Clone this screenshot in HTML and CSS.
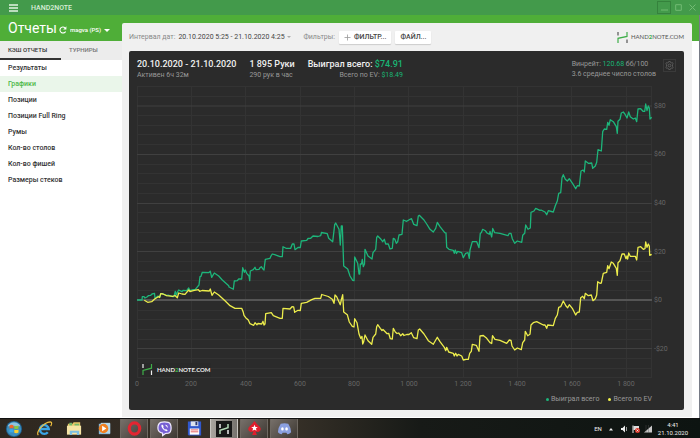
FILE: index.html
```html
<!DOCTYPE html>
<html lang="ru">
<head>
    <meta charset="UTF-8">
    <title>HAND2NOTE</title>
    <link rel="stylesheet" href="styles.css">
</head>
<body>
    <!-- window title bar -->
    <header class="titlebar">
        <button class="menu-button" type="button" aria-label="Меню">
            <svg width="9" height="8" viewBox="0 0 9 8"><path d="M0 1h9M0 4h9M0 7h9" stroke="#e4f3e3" stroke-width="1.4"/></svg>
        </button>
        <span class="app-name">HAND2NOTE</span>
        <div class="window-buttons">
            <button class="focused" type="button" aria-label="Свернуть"><svg width="7" height="7" viewBox="0 0 7 7"><path d="M0 6h7"/></svg></button>
            <button type="button" aria-label="Развернуть"><svg width="7" height="7" viewBox="0 0 7 7"><path d="M.7 .7h5.6v5.6H.7z"/></svg></button>
            <button type="button" aria-label="Закрыть"><svg width="7" height="7" viewBox="0 0 7 7"><path d="M.5 .5l6 6M6.5 .5l-6 6"/></svg></button>
        </div>
    </header>

    <div class="app">
        <aside class="sidebar">
            <div class="sidebar-head">
                <h1>Отчеты</h1>
                <button class="refresh" type="button" aria-label="Обновить">
                    <svg width="8" height="8" viewBox="0 0 8 8"><path d="M6.6 5.4A3 3 0 1 1 6 1.8" fill="none" stroke="#fff" stroke-width="1.1"/><path d="M7.4 .3v3.2H4.2z" fill="#fff"/></svg>
                </button>
                <select class="account" aria-label="Аккаунт"><option>magva (PS)</option></select>
            </div>
            <div class="tabs">
                <button class="active" type="button">КЭШ ОТЧЕТЫ</button>
                <button type="button">ТУРНИРЫ</button>
            </div>
            <nav class="reports">
                <a href="#results">Результаты</a>
                <a class="active" href="#charts">Графики</a>
                <a href="#positions">Позиции</a>
                <a href="#positions-fr">Позиции Full Ring</a>
                <a href="#rooms">Румы</a>
                <a href="#tables">Кол-во столов</a>
                <a href="#chips">Кол-во фишей</a>
                <a href="#stacks">Размеры стеков</a>
            </nav>
        </aside>

        <main class="content">
            <div class="toolbar">
                <label for="dates">Интервал дат:</label>
                <select id="dates" class="dates"><option>20.10.2020 5:25 - 21.10.2020 4:25</option></select>
                <span class="filters-label">Фильтры:</span>
                <button class="tool" type="button"><svg width="7" height="7" viewBox="0 0 7 7"><path d="M3.5 .5v6M.5 3.5h6" stroke="#999" stroke-width=".8"/></svg>ФИЛЬТР...</button>
                <button class="tool" type="button">ФАЙЛ...</button>
                <div class="brand">
                    <svg width="11" height="11" viewBox="0 0 11 11" fill="none" stroke-width="1.2"><path d="M1 0v3.6M10 7.4V11" stroke="#555"/><path d="M1 11V6.3L10 4.4V0" stroke="#3fae49"/></svg>
                    <span>HAND<b>2</b>NOTE.COM</span>
                </div>
            </div>

            <section class="card">
                <div class="stats">
                    <div class="stat">
                        <strong>20.10.2020 - 21.10.2020</strong>
                        <span>Активен 6ч 32м</span>
                    </div>
                    <div class="stat">
                        <strong>1 895 Руки</strong>
                        <span>290 рук в час</span>
                    </div>
                    <div class="stat right">
                        <strong>Выиграл всего: <em>$74.91</em></strong>
                        <span>Всего по EV: <em>$18.49</em></span>
                    </div>
                    <div class="winrate">
                        <span>Винрейт: <em>120.68</em> бб/100</span>
                        <span>3.6 среднее число столов</span>
                    </div>
                    <button class="settings" type="button" aria-label="Настройки">
                        <svg width="9" height="9" viewBox="0 0 9 9" fill="none" stroke="#666" stroke-width=".8"><path d="M3.7 .5h1.6l.3 1 .8.4 1-.3.8 1.3-.7.8v1.6l.7.8-.8 1.3-1-.3-.8.4-.3 1H3.7l-.3-1-.8-.4-1 .3-.8-1.300.7-.8V3.700l-.7-.8.8-1.300 1 .3.8-.4z"/><circle cx="4.5" cy="4.5" r="1.4"/></svg>
                    </button>
                </div>

                <svg class="chart" viewBox="137 84 547 308" role="img" aria-label="График выигрыша">
                    <!-- minor grid -->
                    <path class="minor" d="M137 86.5h515M137 96.5h515M137 115.5h515M137 125.5h515M137 134.5h515M137 144.5h515M137 164.5h515M137 173.5h515M137 183.5h515M137 193.5h515M137 212.5h515M137 222.5h515M137 232.5h515M137 242.5h515M137 261.5h515M137 271.5h515M137 280.5h515M137 290.5h515M137 310.5h515M137 319.5h515M137 329.5h515M137 339.5h515M137 358.5h515M137 368.5h515M137 377.5h515"/>
                    <path class="minor" d="M137.5 86v291M191.5 86v291M245.5 86v291M300.5 86v291M354.5 86v291M408.5 86v291M463.5 86v291M517.5 86v291M571.5 86v291M626.5 86v291M651.5 86v291"/>
                    <!-- $20 steps and the zero line -->
                    <path class="major" d="M137 106h515M137 154.5h515M137 203.5h515M137 251.5h515M137 348.5h515"/>
                    <path class="zero" d="M137 300h515"/>

                    <!-- watermark -->
                    <rect x="139" y="363" width="72" height="14" fill="#292929"/>
                    <g fill="none" stroke-width="1.2">
                        <path d="M143 364v4M151.5 370.5v4.5" stroke="#eee"/>
                        <path d="M143 375v-4.6l8.5-2.2V364" stroke="#3fae49"/>
                    </g>
                    <text class="watermark" x="157" y="372">HAND<tspan fill="#3fae49">2</tspan>NOTE.COM</text>

                    <polyline class="line won" points="137,300 142,300 142.3,296.7 144,296.7 145,298 147.3,296.7 148.3,295.7 150.7,295.3 152,294 154.5,293.3 155,298.3 158,296 160,297 160.7,293.7 163,293.7 166.7,295.7 168,295 172.7,296.7 174,296.7 175.3,291.3 176.3,295 177.5,292 178.7,290 182,291.7 183,290.3 186.7,290.7 188.7,288 190,290.7 193,289.7 195.3,289.3 199,285 200,276.7 201,276.3 202.3,272.3 208.7,272.7 210.3,271.3 211.7,277.3 214.3,273 218.7,276 222.3,280 228.7,285.7 229,287 233.3,289.3 234.3,281 237.3,280.7 238.7,279 241.7,279 242.7,267.7 244.3,272.3 245.3,270 246.7,273.3 249,276 249.7,280.7 250.3,271 253.3,269.7 255,267.3 256,269.7 259,269.3 260,267.7 261.3,266.7 262.7,268.7 264,270 265.3,259.3 270,258.3 271,256 272.3,254 274.7,254.7 280,256.7 282.3,256.7 283,246.7 286,248.3 290.7,248.3 292.3,244 294,244 295,249.7 298.3,247.3 300.3,247.5 301.3,241 306.7,240.3 308,238.5 310.7,238.3 313,236 318,236.5 320.7,235.7 321.5,232.5 327.3,233.7 328.7,238.3 332.7,241.7 334.7,224.7 335.7,223 339,229.3 340.3,245 341.3,226 342.3,226 343.7,266 347.7,269 350,276 352.7,280.3 354,280.7 354.7,257 357.7,263.3 359,274 359.7,274 360.3,264 361.5,264 362.3,259.3 363.3,266.7 364.5,264 365,249.3 368,256 372,259 373,252.7 375.7,249.3 376.7,237.3 377.7,236 381,239.3 382.7,241.7 384.3,239.3 385.7,244 388.3,244 390,249 392.3,248.3 393.3,238.3 394.7,239 396.3,243.3 397.7,241.7 399,235 402,234.3 403.3,220 406.7,221.3 410,219.3 411.5,218.7 413.7,224.3 417,225.7 418.3,216 419.3,215.3 424,220 427,224.5 430,229.3 433.3,232 435.7,228.3 437.3,222.3 440,226.7 444.7,232.7 446,233 446.7,247.3 449,249.3 453.3,250.3 454.3,253.3 455.3,250 456.5,253.5 457.7,251.3 461.7,252.7 463.3,257.7 465.7,253.3 468,252.7 469.3,258.3 470,250 472.3,241.7 476.7,241.7 479,247.7 480.3,233.3 481.3,232.7 482.7,229.3 485.3,230.7 487,233 489.3,234.3 490,231.5 491.7,237 492.7,228.5 494.7,232.7 500,233.3 508,235.7 509.3,233.3 511,233.3 512.3,238.7 514.7,243.3 517.3,241 521.7,242.3 522.7,235.3 524.7,233.3 525.7,225 528,229.3 530.3,228 531,212.3 534,211 535.7,208.3 540,210.3 541,210 545,212 546.7,214.7 548.3,210.7 553.3,212 555.3,205.7 557.3,201 558.7,193.3 560.7,192.7 562,177.7 563.3,174.7 565.3,179.3 567.3,181 569.3,178.7 573.3,184.7 575.7,188.7 577.3,185.7 579.3,186 581,171 583,170 584.3,172 585.3,161 588.3,163.3 591.7,163 592.7,168.3 595.3,166 596.7,162.3 598,149.7 601.3,151 602.7,131.7 604.3,129 606.7,129.3 607.7,122.3 609,125.3 610.3,119.7 613.3,121.7 616.3,126.7 617.3,133.3 618,121.3 620,119.3 621.3,113 623.3,112 625.3,114.7 627,118 628.7,112 630.3,116.7 633.3,119 635.3,118 636.7,121.7 638,109 640.7,108.7 643,111.3 644.7,111.3 645.7,104 647,110.7 648.3,106 649.3,108 650,119 651.7,117.3"/>

                    <polyline class="line ev" points="144.3,300.3 147.7,302.3 151.7,301.7 154.7,299 158.3,296.7 159.5,297.5 160.7,293.7 163,294 166.7,295.7 172.7,296.3 175,295.5 177.3,297.7 178.7,293 182,294 185,294.3 188.7,290 190,291.5 193.3,290.7 198.3,289.7 199.7,291.3 202,290.5 209.3,291 210.3,289 212,295.3 214.3,292 218.7,295 225,300.7 230,305.7 235,308.3 241.7,308.3 243.3,312.3 244,315.3 245.7,317.7 248.3,320 250,323.7 253.7,325.3 255,322.7 257,324.7 258,323.5 261.7,324 263,321.3 264,325 265,324 265.7,313.7 271.3,312.7 273.3,315.7 280,318.3 282.3,318.3 283,308.3 290,309 292,306.7 293.7,307 294.7,312.3 298,310.3 300.3,310.5 301.3,303.3 306.7,302.3 311.7,299.7 315,298.3 320.7,298.3 321.7,294.5 328.3,296.5 332.3,299.3 334,303.3 335,295 336.7,296.7 340.3,304.7 341.3,300 342.7,294.7 343.7,312 347.3,314.7 349.3,322 352.3,326.3 354,327 354.7,318.7 357,322.7 359,334 360.7,338.3 362,336.5 362.7,344 363.7,341.7 365,335 368,340.7 371.7,344.3 373,337.3 375.7,334 376.7,326.7 377.7,324.7 380.3,328.3 382,330.5 383,329.5 385.7,332.3 387,333.7 388.7,333.3 390.3,338.7 392.3,339 393.3,328.3 395.3,332 397,333.5 398.7,333 400.7,335.7 402.7,333.7 404,335.5 406.7,334.5 409,334.5 411.3,332.7 413.7,337.7 417,338.7 418.3,330 419.7,329 424,334 428.3,340.7 433.3,344.3 437.3,337.3 440,341.7 444.3,347.3 445.7,350.7 446.7,347.3 448.7,352 453.3,353.3 454.3,356 455.7,353.3 457,356 458.3,354.3 461.7,356 463.3,360 466,359.3 468.3,359.3 469.7,353.3 471.3,351.3 472.3,344.3 476.3,345.3 479,351.3 480,336 483.3,335.5 486.7,338.3 490,342.7 491.7,343.5 492.5,335.7 495,339.3 500,340.3 506.7,343.3 509.3,340 511,340.3 512,346 514.7,350 517.3,348 521.3,349.7 522.7,342.7 524.7,340 525.3,331.3 527.7,335.7 530,334.3 531,325 533.3,322.7 536.7,321.7 543.3,325 545,325 546.7,328.3 547.7,325 553.3,325.7 555.3,318.3 557.3,315 558.7,307.3 560.7,306.7 563.3,301 566,306 567.7,307.7 569.3,304.7 572.3,308.3 575.7,315 577.3,312.3 579.3,312 580.7,297.7 582.7,296.3 584.3,298.7 585.3,293.3 588.3,295.7 591.3,295 593,300.7 595.3,298.7 596.7,295 597.7,281.7 600,283.3 601.3,283 603.3,273.3 606.7,272.3 607.7,265.7 609,268.7 611.3,262 613.3,263.3 616.3,268.3 617.3,275.3 618,262.7 620,260.7 622,254 624.3,254 626,258.7 627,256 627.7,259 628.7,253 630.3,256.3 635.3,256.3 636.7,260 638,247.3 640.7,246.7 643.3,249.3 645,248.7 645.7,242 647,247.3 648.3,244 649.3,246 649.7,255.3 651.7,254.3"/>

                    <g class="axis">
                        <text x="654" y="108">$80</text>
                        <text x="654" y="156">$60</text>
                        <text x="654" y="205">$40</text>
                        <text x="654" y="254">$20</text>
                        <text x="654" y="302">$0</text>
                        <text x="654" y="351">-$20</text>
                    </g>
                    <g class="axis middle">
                        <text x="137" y="386">0</text>
                        <text x="191" y="386">200</text>
                        <text x="246" y="386">400</text>
                        <text x="300" y="386">600</text>
                        <text x="354" y="386">800</text>
                        <text x="409" y="386">1 000</text>
                        <text x="463" y="386">1 200</text>
                        <text x="517" y="386">1 400</text>
                        <text x="572" y="386">1 600</text>
                        <text x="626" y="386">1 800</text>
                    </g>
                </svg>

                <div class="legend">
                    <span class="won">Выиграл всего</span>
                    <span class="ev">Всего по EV</span>
                </div>
            </section>
        </main>
    </div>

    <!-- desktop taskbar -->
    <footer class="taskbar">
        <button type="button" aria-label="Пуск">
            <svg width="18" height="18" viewBox="0 0 20 20"><circle cx="10" cy="10" r="9" fill="#1f5f8c"/><circle cx="10" cy="10" r="8" fill="#3d8fbd"/><path d="M3 7a7.5 6.5 0 0 1 14 0z" fill="#8fc4de"/><path d="M5 6q2.3-1.3 4.5 0v3.5q-2.2-1-4.5 0z" fill="#f0662c"/><path d="M10.3 6.3q2.2 1 4.7-.3v3.5q-2.5 1-4.7 .2z" fill="#8cc63e"/><path d="M5 10.5q2.3-1 4.5 0V14q-2.2-1-4.5 0z" fill="#3ca9e8"/><path d="M10.3 10.7q2.2 .8 4.7-.2V14q-2.5 1.2-4.7 .2z" fill="#fcd02f"/></svg>
        </button>
        <button type="button" aria-label="Internet Explorer">
            <svg width="17" height="17" viewBox="0 0 18 18" fill="none"><path d="M4.5 9.5H13.5A4.7 4.7 0 1 0 12.5 13" stroke="#3aa5e6" stroke-width="2.5"/><path d="M2.5 16C-.5 13 8 2.5 15 2c2.5 0 1.5 3 .5 4.5" stroke="#f0c040" stroke-width="1.2"/></svg>
        </button>
        <button type="button" aria-label="Проводник">
            <svg width="17" height="17" viewBox="0 0 18 18"><path d="M2 4h5l1-1.5h7V14H2z" fill="#e8c766"/><path d="M3.5 3h3v3h-3zM9 4h5v2H9z" fill="#74b96b"/><path d="M1 6h15v9.5H1z" fill="#f7e5a4"/><path d="M4 16v-4.5h10V16h-2.5v-2.5h-5V16z" fill="#7cc0e3"/></svg>
        </button>
        <button type="button" aria-label="Media Player">
            <svg width="17" height="17" viewBox="0 0 18 18"><path d="M3 4h12v11H3z" fill="#86b8d8"/><path d="M5 3h10v11H5z" fill="#b4d7e9"/><circle cx="8" cy="9" r="5" fill="#f08021"/><path d="M6.5 6l4.5 3-4.5 3z" fill="#fff"/></svg>
        </button>
        <button class="open" type="button" aria-label="Opera">
            <svg width="17" height="17" viewBox="0 0 18 18"><ellipse cx="9" cy="9" rx="5.5" ry="6" fill="none" stroke="#e32531" stroke-width="3.4"/></svg>
        </button>
        <button class="open" type="button" aria-label="Viber">
            <svg width="17" height="17" viewBox="0 0 18 18"><path d="M5 2.5Q9 1.5 13 2.5q3 1 3 6t-3 5.5l-3 .3L7 16.500V14Q2 13 2 8.500t3-6z" fill="#7760d4" stroke="#eee9ff" stroke-width="1.3"/><path d="M6 5q-1 1 .5 3.500T11 12l1.500-1-2-1.500-1 .7Q8 9 7.500 7.500l.7-.8L7 5zM9.500 5q3 0 3 3.500" fill="#fff"/></svg>
        </button>
        <button type="button" aria-label="Total Commander">
            <svg width="17" height="17" viewBox="0 0 18 18"><path d="M2 1.5h14v15H3l-1-1z" fill="#3158cc"/><path d="M5 1.5h8v5H5z" fill="#dde3ef"/><path d="M10 2h2v3.5h-2z" fill="#2b3a75"/><path d="M4 9h10v6.5H4z" fill="#fff"/><path d="M5 10.5h8M5 12.5h8" stroke="#e55a5a"/></svg>
        </button>
        <button class="open current" type="button" aria-label="Hand2Note">
            <svg width="16" height="16" viewBox="0 0 16 16"><path d="M0 0h16v16H0z" fill="#171717"/><g fill="none" stroke-width="1.5"><path d="M4 3v4M12 9v4" stroke="#eee"/><path d="M4 13V9.2l8-2.4V3" stroke="#b5dcb8"/></g></svg>
        </button>
        <button class="open" type="button" aria-label="PokerStars">
            <svg width="17" height="17" viewBox="0 0 18 18"><path d="M9 1q2 3 5 5.500c4 3.500 0 8-4 5.500l1.500 4h-5L8 12c-4 2.500-8-2-4-5.500Q7 4 9 1z" fill="#e01e2c"/><path d="M9 5l1 2.3 2.5 .2-2 1.5 .7 2.5L9 10.2l-2.2 1.3 .7-2.5-2-1.500L8 7.300z" fill="#fff"/></svg>
        </button>
        <button class="open" type="button" aria-label="Discord">
            <svg width="17" height="17" viewBox="0 0 18 18"><path d="M5 4q4-1 8 0 3 4.500 3 9-2 2-4 2l-1-1.500H7L6 15q-2 0-4-2 0-4.500 3-9z" fill="#8ba0e0"/><ellipse cx="6.8" cy="9.5" rx="1.4" ry="1.7" fill="#fff"/><ellipse cx="11.2" cy="9.5" rx="1.4" ry="1.7" fill="#fff"/></svg>
        </button>
        <div class="tray">
            <span>EN</span>
            <svg width="6" height="6" viewBox="0 0 6 6"><path d="M1 4.500L3 2l2 2.500z" fill="#eee"/></svg>
            <div class="tray-icons">
                <svg width="8" height="8" viewBox="0 0 8 8"><path d="M1 3h1.500L5 .5v7L2.500 5H1z" fill="#eee"/><path d="M6.500 2v4" stroke="#bbb" stroke-width=".8"/></svg>
                <svg width="8" height="8" viewBox="0 0 8 8"><path d="M1 .5V8" stroke="#eee"/><path d="M1.500 1H7v4H1.500z" fill="#ddd"/><circle cx="5.500" cy="5.500" r="2.500" fill="#d9382b"/><path d="M4.500 4.500l2 2M6.500 4.500l-2 2" stroke="#fff" stroke-width=".7"/></svg>
                <svg width="8" height="8" viewBox="0 0 8 8"><path d="M0 7.500L8 .5v7z" fill="#c8c8c8"/><path d="M2 0v8M4.500 0v8" stroke="#555" stroke-width=".4"/></svg>
            </div>
            <div class="clock"><span>4:41</span><span>21.10.2020</span></div>
        </div>
    </footer>
</body>
</html>
```
FILE: styles.css
```css
* {
    box-sizing: border-box;
}
body {
    margin: 0;
    min-height: 100vh;
    display: flex;
    flex-direction: column;
    font-family: Roboto, "Liberation Sans", sans-serif;
    font-size: 7px;
    line-height: 10px;
    color: #333;
    background-color: #fff;
}
button, select {
    font: inherit;
    color: inherit;
    margin: 0;
    padding: 0;
    border: 0;
    background: none;
    appearance: none;
}
svg {
    display: block;
    flex: none;
}
em {
    font-style: normal;
    color: #19b575;
}

/* title bar */
.titlebar {
    display: flex;
    align-items: center;
    height: 15px;
    padding-left: 9px;
    background-color: #439a4b;
    color: #d8eed8;
}
.app-name {
    margin-left: 13px;
    font-weight: 500;
}
.window-buttons {
    display: flex;
    margin-left: auto;
    padding-right: 1px;
}
.window-buttons button {
    width: 14px;
    height: 13px;
    display: grid;
    place-items: center;
}
.window-buttons .focused {
    border: 1px solid #35823c;
}
.window-buttons path {
    fill: none;
    stroke: #72bb73;
}

/* green header strip runs behind the sidebar and the content panel */
.app {
    flex: 1;
    display: flex;
    background: linear-gradient(#4fae38 26px, #fff 26px);
    border-right: 1px solid #777b86;
}
.sidebar {
    width: 122px;
    flex: none;
}
.sidebar-head {
    display: flex;
    align-items: center;
    height: 26px;
    padding-left: 8px;
    color: #fff;
}
h1 {
    margin: 0;
    font-size: 14px;
    font-weight: 400;
}
.refresh {
    margin: 4px 3px 0 2px;
}
.account {
    margin-top: 4px;
    font-size: 6px;
    font-weight: 500;
}
/* drop-down arrow of the account list */
.sidebar-head::after {
    content: "";
    margin: 4px 0 0 2px;
    border: 3px solid transparent;
    border-top-color: #fff;
    border-bottom: 0;
}
.tabs {
    display: flex;
    height: 19px;
    background-color: #ececec;
}
.tabs button {
    flex: 1;
    padding-left: 8px;
    text-align: left;
    color: #777;
    font-size: 6px;
    font-weight: 500;
    border-bottom: 2px solid transparent;
}
.tabs .active {
    color: #333;
    border-color: #333;
}
.reports a {
    display: block;
    height: 16px;
    padding-left: 8px;
    line-height: 16px;
    font-weight: 500;
    color: #333;
    text-decoration: none;
}
.reports .active {
    background-color: #eaf6ea;
    color: #4db848;
}

/* content panel */
.content {
    flex: 1;
    min-width: 0;
    margin: 8px 7px 1px 0;
    padding: 0 8px 7px 7px;
    background-color: #f0f0f0;
    border-radius: 2px 2px 0 0;
}
.toolbar {
    display: flex;
    align-items: center;
    height: 28px;
    color: #888;
}
.dates {
    margin-left: 3px;
    color: #444;
}
/* drop-down arrow of the date range */
.dates + .filters-label::before {
    content: "";
    display: inline-block;
    margin: 0 12px 0 2px;
    vertical-align: middle;
    border: 2px solid transparent;
    border-top-color: #aaa;
    border-bottom: 0;
}
.tool {
    display: flex;
    align-items: center;
    gap: 3px;
    height: 13px;
    margin-left: 4px;
    padding: 0 5px;
    background-color: #fff;
    border-radius: 1px;
    box-shadow: 0 1px 1px #ccc;
    color: #444;
    font-weight: 500;
}
.brand {
    display: flex;
    align-items: center;
    gap: 3px;
    margin-left: auto;
    font-family: Lato, sans-serif;
    font-size: 6px;
    color: #555;
}
.brand b {
    color: #3fae49;
}

/* dark chart card */
.card {
    padding: 0 0 4px 8px;
    background-color: #2b2b2b;
    border-radius: 2px;
    color: #999;
}
.stats {
    display: flex;
    height: 33px;
    padding: 7px 8px 0 0;
    gap: 13px;
}
.stat {
    display: flex;
    flex-direction: column;
    white-space: nowrap;
}
.stat strong {
    height: 12px;
    font-size: 9px;
    line-height: 12px;
    font-weight: 500;
    color: #f0f0f0;
}
.right {
    text-align: right;
}
.winrate {
    display: flex;
    flex-direction: column;
    margin: 1px -6px 0 auto;
}
.settings {
    width: 13px;
    height: 13px;
    margin-top: 1px;
    display: grid;
    place-items: center;
    border: 1px solid #3a3a3a;
}
.chart {
    width: 100%;
    height: auto;
    overflow: visible;
}
.minor {
    stroke: #333;
}
.major {
    stroke: #404040;
}
.zero {
    stroke: #555;
    stroke-width: 2;
}
.line {
    fill: none;
    stroke-width: 1.3;
    stroke-linejoin: round;
}
.line.won {
    stroke: #1db57a;
}
.line.ev {
    stroke: #eded4c;
}
.watermark {
    font-family: Lato, sans-serif;
    font-size: 6px;
    font-weight: 700;
    fill: #eee;
}
.axis {
    font-size: 7px;
    fill: #666;
}
.middle {
    text-anchor: middle;
}
.legend {
    display: flex;
    justify-content: flex-end;
    gap: 9px;
    height: 14px;
    padding-right: 32px;
    line-height: 14px;
}
.legend span::before {
    content: "";
    display: inline-block;
    width: 3px;
    height: 3px;
    margin-right: 2px;
    border-radius: 50%;
    vertical-align: middle;
    background-color: #1db57a;
}
.legend .ev::before {
    background-color: #f3f34c;
}

/* taskbar */
.taskbar {
    display: flex;
    height: 20px;
    background: linear-gradient(90deg, #2e271f, #393229 40%, #171a17 60%, #0d1411);
    border-top: 1px solid #111;
}
.taskbar button {
    width: 28px;
    margin-right: 2px;
    display: grid;
    place-items: center;
}
.taskbar .open {
    background: linear-gradient(135deg, #77706a, #3d3832);
    border: 1px solid #6f6962;
    border-width: 0 1px;
}
.taskbar .current {
    background: linear-gradient(90deg, #a8a49e, #77736e);
    border-color: #c8c5c0;
}
.tray {
    display: flex;
    align-items: center;
    gap: 6px;
    margin-left: auto;
    padding-right: 12px;
    font-size: 6px;
    color: #eee;
}
.tray-icons {
    display: flex;
    gap: 4px;
}
.clock {
    display: flex;
    flex-direction: column;
    line-height: 8px;
    text-align: center;
}
```
